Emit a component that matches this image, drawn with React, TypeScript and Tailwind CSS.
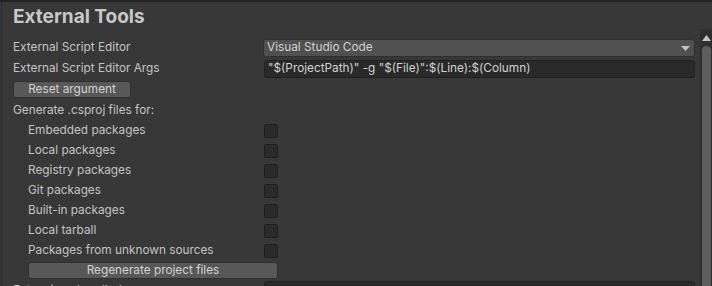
import React from 'react';

const packages = [
  'Embedded packages',
  'Local packages',
  'Registry packages',
  'Git packages',
  'Built-in packages',
  'Local tarball',
  'Packages from unknown sources',
];

const Checkbox = () => (
  <div className="w-[14px] h-[14px] rounded-[2px] bg-[#2b2b2b] border border-[#1f1f1f]" />
);

const App = () => {
  return (
    <div
      className="w-[712px] h-[286px] overflow-hidden bg-[#383838] text-[#c4c4c4] flex flex-col"
      style={{ fontFamily: 'Inter, "Noto Sans", sans-serif' }}
    >
      <div className="h-[2px] bg-[#232323] shrink-0" />
      <div className="flex flex-1 min-h-0">
        <div className="w-[1px] bg-[#2c2c2c] ml-[1px]" />
        <div className="flex-1 min-w-0 pl-[11px] pr-[5px]">
          <h1 className="text-[19px] font-bold leading-[24px] mt-[3px] text-[#c8c8c8]">External Tools</h1>

          <div className="mt-[10px] flex flex-col text-[11.8px]">
            <div className="flex items-center h-[18px]">
              <span className="w-[250px]">External Script Editor</span>
              <div className="flex-1 h-[18px] rounded-[3px] bg-[#515151] border border-[#2f2f2f] flex items-center justify-between pl-[3px] pr-[4px] text-[#d2d2d2]">
                <span>Visual Studio Code</span>
                <svg width="9" height="5" viewBox="0 0 9 5">
                  <path d="M0 0h9L4.5 5z" fill="#c4c4c4" />
                </svg>
              </div>
            </div>

            <div className="flex items-center h-[18px] mt-[3px]">
              <span className="w-[251px]">External Script Editor Args</span>
              <div className="flex-1 h-[18px] rounded-[3px] bg-[#2a2a2a] border border-[#212121] flex items-center pl-[3px] text-[#d2d2d2]">
                "$(ProjectPath)" -g "$(File)":$(Line):$(Column)
              </div>
            </div>

            <div className="flex mt-[3px]">
              <div className="w-[118px] h-[17px] rounded-[3px] bg-[#585858] border border-[#303030] flex items-center justify-center text-[#d2d2d2]">
                Reset argument
              </div>
            </div>

            <div className="h-[20px] flex items-center mt-[3px]">Generate .csproj files for:</div>

            {packages.map((p) => (
              <div key={p} className="h-[20px] flex items-center">
                <span className="w-[251px] pl-[15px]">{p}</span>
                <Checkbox />
              </div>
            ))}

            <div className="flex mt-[1px] pl-[15px]">
              <div className="w-[250px] h-[17px] rounded-[3px] bg-[#585858] border border-[#303030] flex items-center justify-center text-[#d2d2d2]">
                Regenerate project files
              </div>
            </div>

            <div className="flex items-start h-[18px] mt-[2px]">
              <span className="w-[251px] pt-[1px]">Extensions handled:</span>
              <div className="flex-1 h-[18px] rounded-[3px] bg-[#2a2a2a] border border-[#212121]" />
            </div>
          </div>
        </div>

        <div className="w-[12px] mt-[27px] bg-[#2f2f2f] flex flex-col items-center">
          <svg width="9" height="6" viewBox="0 0 9 6" className="mt-[6px]">
            <path d="M0 6h9L4.5 0z" fill="#c4c4c4" />
          </svg>
          <div className="w-[9px] flex-1 mt-[5px] rounded-t-[5px] bg-[#5f5f5f]" />
        </div>
      </div>
    </div>
  );
};

export default App;
